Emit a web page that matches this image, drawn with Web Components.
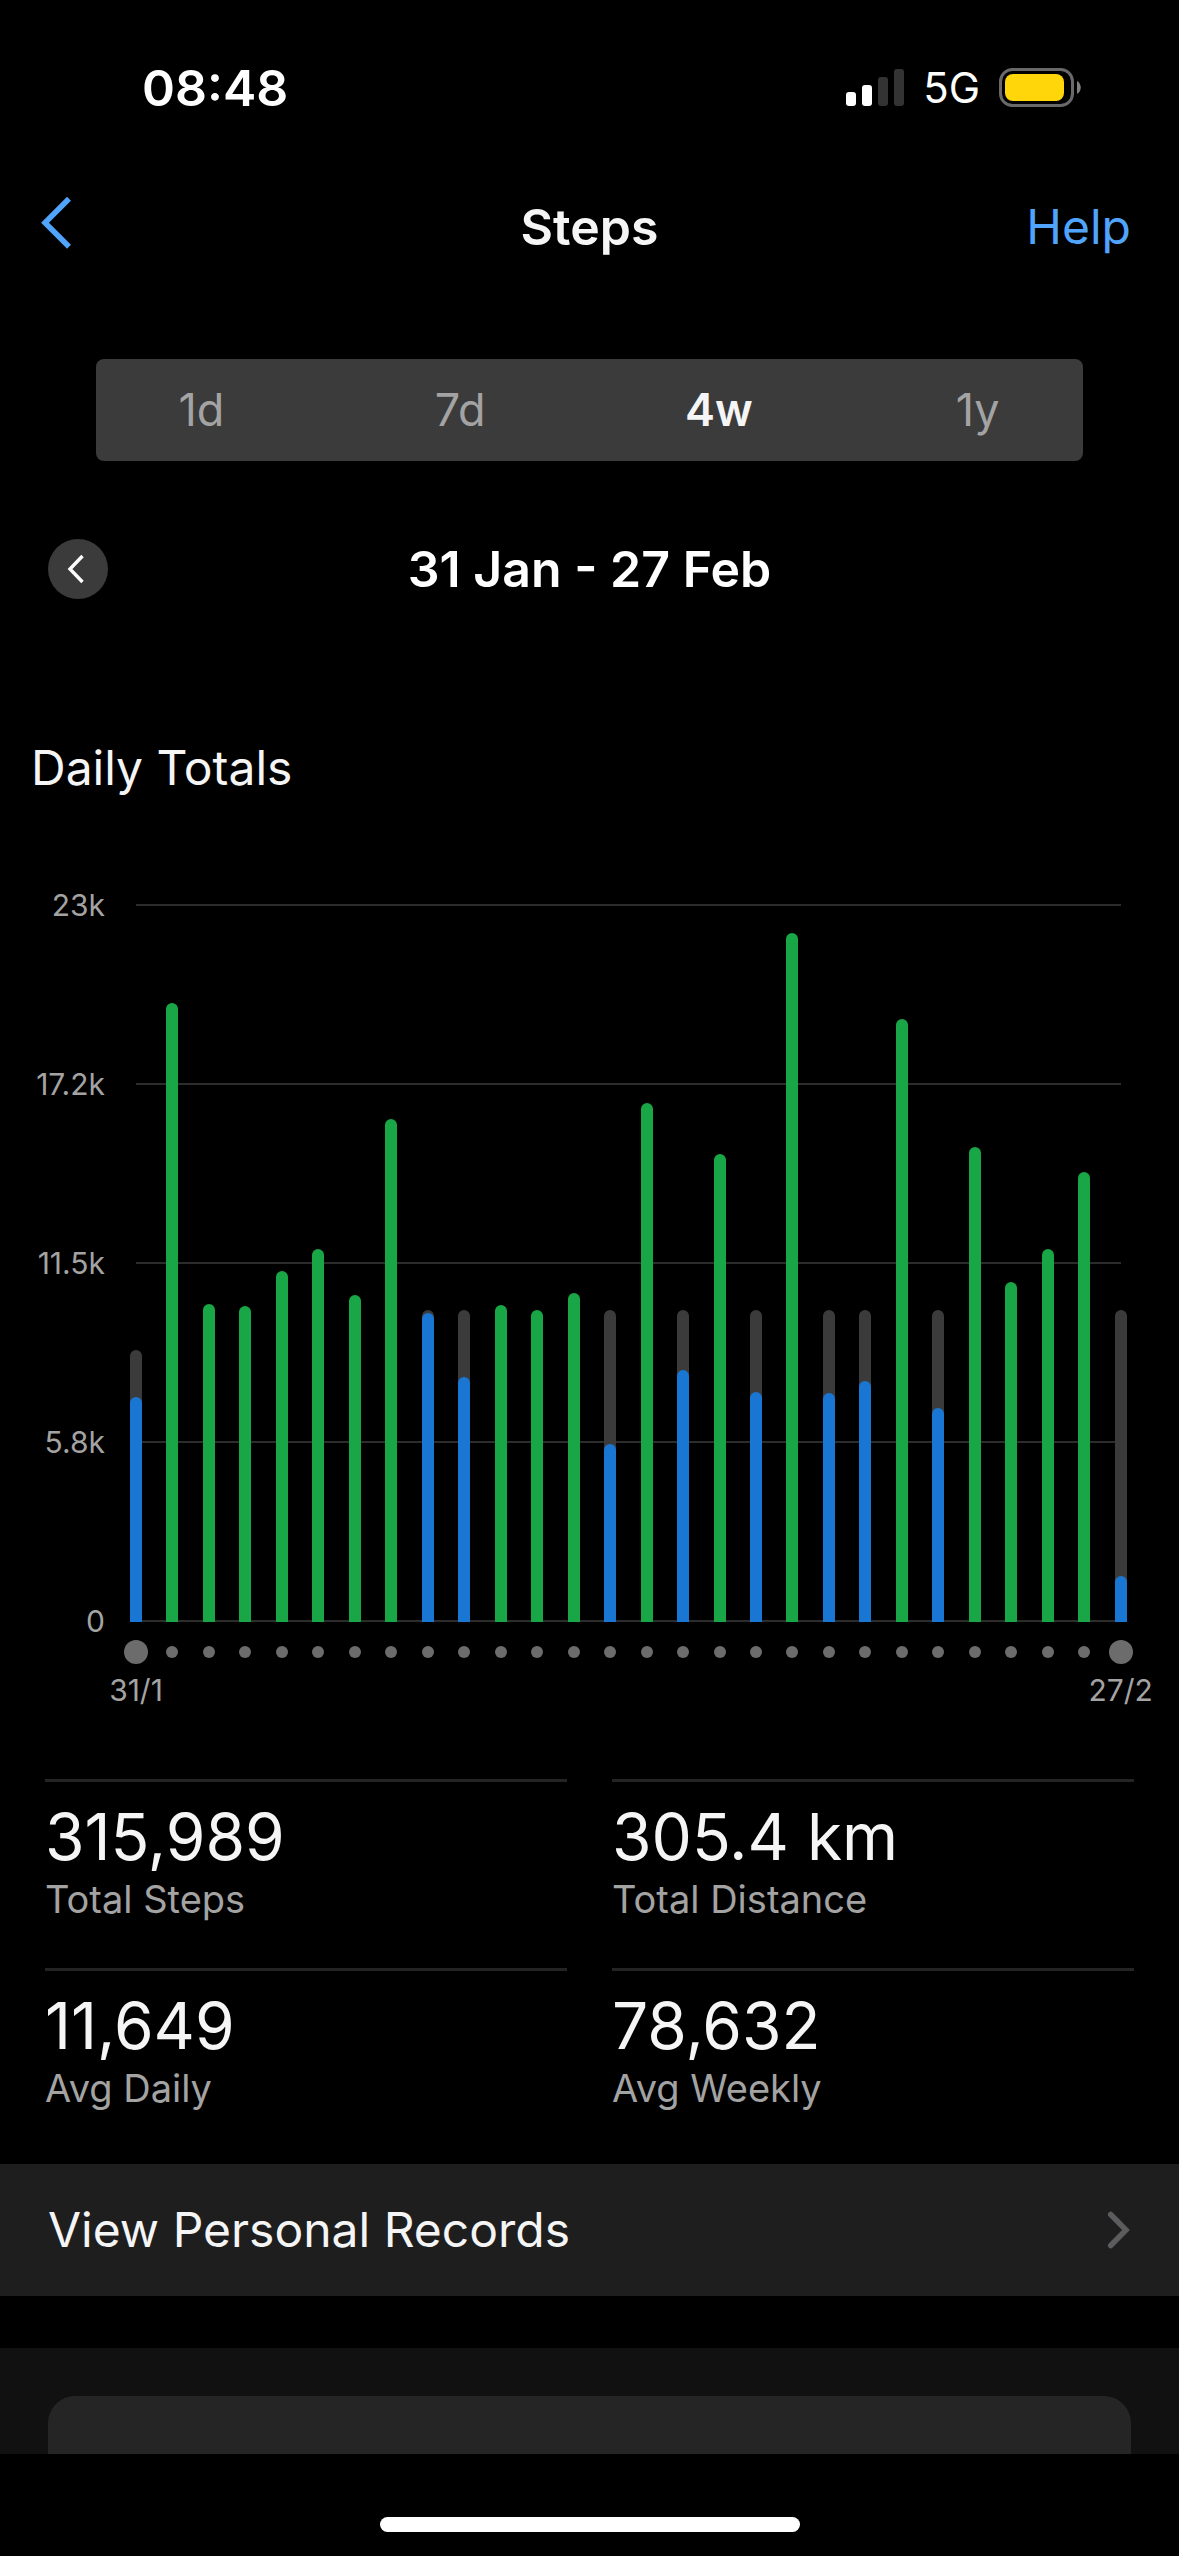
<!DOCTYPE html>
<html lang="en">
<head>
<meta charset="utf-8">
<meta name="viewport" content="width=device-width, initial-scale=1">
<title>Steps</title>
<style>
  :root {
    --text: #f5f5f5;
    --muted: #a3a3a3;
    --accent: #50a4fb;
    --control: #3b3b3b;
    --rule: #242424;
    --good: #18a646;
    --under: #1976d2;
    --dot: #6c6c6c;
  }
  html { background: #000; }
  body { margin: 0; min-height: 100vh; background: #000; color: var(--text);
         font-family: Inter, "Liberation Sans", sans-serif; font-size: 48px; line-height: 60px; }
</style>
</head>
<body>
<steps-screen></steps-screen>

<script>
const define = (name, html, setup) => {
  const tpl = document.createElement('template');
  tpl.innerHTML = html;
  customElements.define(name, class extends HTMLElement {
    constructor() {
      super();
      this.attachShadow({ mode: 'open' }).append(tpl.content.cloneNode(true));
    }
    connectedCallback() { if (setup) setup(this, this.shadowRoot); }
  });
};

define('status-bar', `
  <style>
    :host { display: flex; align-items: center; justify-content: space-between; height: 175px; padding: 0 98px 0 142px; }
    .time { font-size: 50px; font-weight: 600; color: #fff; }
    .right { display: flex; align-items: center; gap: 19px; color: #fff; font-size: 42px; font-weight: 400; }
    svg { display: block; }
  </style>
  <span class="time">08:48</span>
  <div class="right">
    <svg width="58" height="38" viewBox="0 0 58 38" aria-hidden="true">
      <rect x="0" y="23" width="10" height="14" rx="3" fill="#fff"/>
      <rect x="16" y="16" width="10" height="21" rx="3" fill="#fff"/>
      <rect x="32" y="8" width="10" height="29" rx="3" fill="#333"/>
      <rect x="48" y="0" width="10" height="37" rx="3" fill="#333"/>
    </svg>
    <span>5G</span>
    <svg width="82" height="39" viewBox="0 0 82 39" aria-hidden="true">
      <rect x="1.5" y="1.5" width="72" height="36" rx="12" fill="none" stroke="#696969" stroke-width="3"/>
      <rect x="6" y="6" width="59" height="27" rx="8" fill="#ffd60a"/>
      <path d="M78 13c5 3 5 10 0 13z" fill="#808080"/>
    </svg>
  </div>`);

define('nav-bar', `
  <style>
    :host { display: grid; grid-template-columns: 1fr auto 1fr; align-items: center; height: 104px; padding: 0 48px; }
    button { all: unset; cursor: pointer; display: block; justify-self: start; margin-left: -8px; }
    svg { display: block; }
    h1 { margin: 0; font-size: 50px; font-weight: 600; }
    a { justify-self: end; color: var(--accent); text-decoration: none; }
  </style>
  <button aria-label="Back"><svg width="34" height="60" viewBox="0 0 34 60"><path d="M29 1.700L5 25.700L29 49.700" fill="none" stroke="#50a4fb" stroke-width="5.500"/></svg></button>
  <h1><slot></slot></h1>
  <a href="#help">Help</a>`);

define('range-tabs', `
  <style>
    :host { display: flex; gap: 48px; height: 102px; margin: 80px 96px 0; border-radius: 8px; background: var(--control); }
    button { all: unset; flex: 1 1 0; text-align: center; font-size: 45px; color: var(--muted); cursor: pointer; }
    button[aria-pressed=true] { color: var(--text); font-weight: 600; }
  </style>
  <button aria-pressed="false">1d</button><button aria-pressed="false">7d</button><button aria-pressed="true">4w</button><button aria-pressed="false">1y</button>`);

define('date-pager', `
  <style>
    :host { display: grid; grid-template-columns: 1fr auto 1fr; align-items: center; margin: 78px 48px 0; }
    button { all: unset; display: grid; place-items: center; width: 60px; height: 60px; border-radius: 50%; background: var(--control); cursor: pointer; }
    svg { display: block; }
    strong { font-size: 50px; font-weight: 600; color: #fff; }
  </style>
  <button aria-label="Previous period"><svg width="22" height="30" viewBox="0 0 22 30"><path d="M15.500 2L3 15L15.500 28" fill="none" stroke="#fff" stroke-width="3.400"/></svg></button>
  <strong><slot></slot></strong>`);

define('steps-chart', `
  <style>
    :host { display: grid; grid-template-columns: 105px 1fr; column-gap: 31px; margin: 106px 58px 0 0; font-size: 30px; line-height: 30px; color: var(--muted); }
    .axis { display: flex; flex-direction: column; justify-content: space-between; margin: -14px 0; text-align: right; }
    .plot { display: grid; height: 718px; }
    .grid, .bars { grid-area: 1 / 1; display: flex; justify-content: space-between; }
    .grid { flex-direction: column; }
    .grid i { height: 2px; background: #2c2c2c; }
    .bars, .ticks { margin: 0 -6px; }
    .bar { display: grid; align-items: end; width: 12px; }
    .bar i { grid-area: 1 / 1; height: calc(var(--v) / 23000 * 100%); border-radius: 6px 6px 0 0; background: var(--c); }
    .ticks { grid-column: 2; display: flex; justify-content: space-between; padding-top: 18px; }
    .tick { display: flex; flex-direction: column; align-items: center; gap: 11px; width: 12px; height: 66px; white-space: nowrap; }
    .tick i { flex: none; width: 12px; height: 12px; margin: 6px 0; border-radius: 50%; background: var(--dot); }
    .tick.end i { width: 24px; height: 24px; margin: 0; }
  </style>
  <div class="axis"><span>23k</span><span>17.2k</span><span>11.5k</span><span>5.8k</span><span>0</span></div>
  <div class="plot">
    <div class="grid"><i></i><i></i><i></i><i></i><i></i></div>
    <div class="bars"></div>
  </div>
  <div class="ticks"></div>`,
  (host, root) => {
    const steps = host.getAttribute('steps').split(' ').map(Number);
    const firstGoal = Number(host.getAttribute('first-goal'));
    const fill = (v, c) => `<i style="--v:${v};--c:var(${c})"></i>`;
    root.querySelector('.bars').innerHTML = steps.map((v, i) => {
      const goal = i ? 10000 : firstGoal;
      return `<div class="bar">${v < goal ? fill(goal, '--control') + fill(v, '--under') : fill(v, '--good')}</div>`;
    }).join('');
    const ends = { 0: host.getAttribute('from'), [steps.length - 1]: host.getAttribute('to') };
    root.querySelector('.ticks').innerHTML = steps.map((v, i) =>
      ends[i] ? `<div class="tick end"><i></i><span>${ends[i]}</span></div>` : `<div class="tick"><i></i></div>`).join('');
  });

define('stat-item', `
  <style>
    :host { display: block; height: 186px; border-top: 3px solid var(--rule); }
    .value { padding-top: 15px; font-size: 64px; line-height: 80px; }
    .label { font-size: 38px; line-height: 44px; color: var(--muted); }
  </style>
  <div class="value"><slot></slot></div>
  <div class="label"><slot name="label"></slot></div>`);

define('link-row', `
  <style>
    :host { display: block; }
    a { display: flex; align-items: center; justify-content: space-between; height: 132px; padding: 0 48px; background: #1e1e1e; color: var(--text); text-decoration: none; }
    svg { display: block; }
  </style>
  <a href="#records"><slot></slot>
    <svg width="26" height="40" viewBox="0 0 26 40" aria-hidden="true"><path d="M5.700 4.500L21 20L5.700 35.500" fill="none" stroke="#5c5c5e" stroke-width="5.500" stroke-linecap="round"/></svg></a>`);

define('next-card', `
  <style>
    :host { display: block; margin-top: 52px; padding: 48px 48px 0; background: #111; }
    div { height: 58px; border-radius: 27px 27px 0 0; background: #252525; }
  </style>
  <div></div>`);

define('home-indicator', `
  <style>
    :host { display: flex; justify-content: center; padding: 63px 0 24px; }
    div { width: 420px; height: 15px; border-radius: 8px; background: #fff; }
  </style>
  <div></div>`);

define('steps-screen', `
  <style>
    :host { display: block; }
    h2 { margin: 139px 31px 0; font-size: 48px; font-weight: 400; }
    .stats { display: grid; grid-template-columns: 1fr 1fr; column-gap: 45px; margin: 73px 45px 7px; }
  </style>
  <status-bar></status-bar>
  <nav-bar>Steps</nav-bar>
  <range-tabs></range-tabs>
  <date-pager>31 Jan - 27 Feb</date-pager>
  <h2>Daily Totals</h2>
  <steps-chart first-goal="8713" from="31/1" to="27/2"
    steps="7218 19828 10187 10122 11244 11948 10475 16113 9898 7848 10155 10001 10539 5702 16625 8072 14992 7368 22071 7336 7720 19316 6855 15216 10891 11948 14415 1474"></steps-chart>
  <div class="stats">
    <stat-item>315,989<span slot="label">Total Steps</span></stat-item>
    <stat-item>305.4 km<span slot="label">Total Distance</span></stat-item>
    <stat-item>11,649<span slot="label">Avg Daily</span></stat-item>
    <stat-item>78,632<span slot="label">Avg Weekly</span></stat-item>
  </div>
  <link-row>View Personal Records</link-row>
  <next-card></next-card>
  <home-indicator></home-indicator>`);
</script>
</body>
</html>
